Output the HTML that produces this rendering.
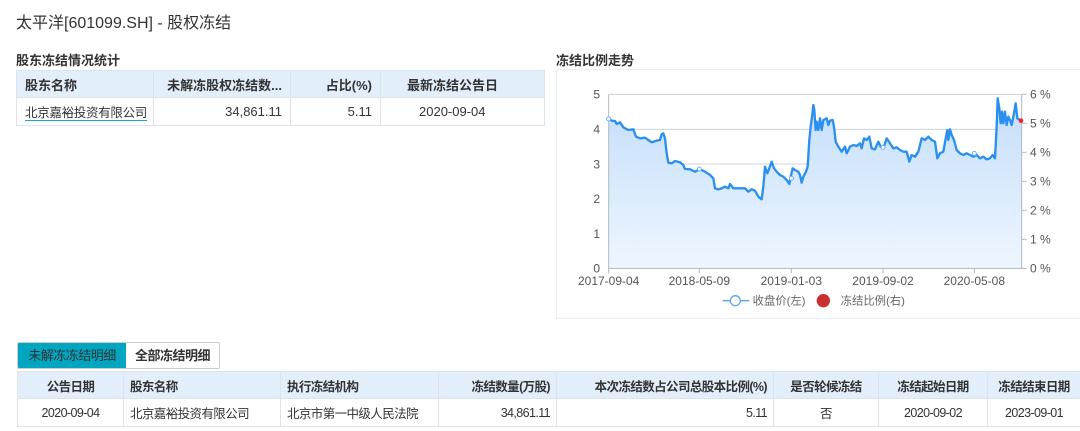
<!DOCTYPE html>
<html><head><meta charset="utf-8"><style>
*{margin:0;padding:0;box-sizing:border-box}
body{width:1080px;height:431px;background:#fff;font-family:"Liberation Sans","Noto Sans CJK SC",sans-serif;color:#333;position:relative;overflow:hidden}
.abs{position:absolute}
table{border-collapse:collapse;table-layout:fixed}
td,th{border:1px solid #dde3ea;font-size:13px;white-space:nowrap;overflow:hidden;padding:0 8px}
th{background:#e3eefb;font-weight:bold;color:#333}
.r{text-align:right}.c{text-align:center}.l{text-align:left}
#b td,#b th{font-size:12.5px;letter-spacing:-0.6px;padding:0 6px}
</style></head><body>
<div class="abs" style="left:16px;top:9px;font-size:16px;color:#333">太平洋[601099.SH] - 股权冻结</div>
<div class="abs" style="left:16px;top:50px;font-size:13px;font-weight:bold">股东冻结情况统计</div>
<table class="abs" style="left:16px;top:70px;width:528px">
<colgroup><col style="width:137px"><col style="width:137px"><col style="width:90px"><col style="width:164px"></colgroup>
<tr style="height:27px"><th class="l">股东名称</th><th class="r">未解冻股权冻结数...</th><th class="r">占比(%)</th><th class="l" style="padding-left:26px">最新冻结公告日</th></tr>
<tr style="height:28px"><td style="padding:0 5px 0 8px;font-size:12.5px;letter-spacing:-0.3px"><span style="border-bottom:1px solid #1aa8c8">北京嘉裕投资有限公司</span></td><td class="r">34,861.11</td><td class="r">5.11</td><td class="l" style="padding-left:38px">2020-09-04</td></tr>
</table>
<div class="abs" style="left:556px;top:50px;font-size:13px;font-weight:bold">冻结比例走势</div>
<div class="abs" style="left:556px;top:69px;width:530px;height:250px;border:1px solid #e6eef8"></div>
<svg class="abs" style="left:550px;top:40px" width="530" height="280" viewBox="0 0 1590 840">
<defs><linearGradient id="g" x1="0" y1="0" x2="0" y2="1"><stop offset="0" stop-color="#c4defa"/><stop offset="1" stop-color="#eef6ff"/></linearGradient></defs>
<g stroke="#ccd3dc" stroke-width="3"><line x1="176" y1="163" x2="1415" y2="163"/><line x1="176" y1="268" x2="1415" y2="268"/><line x1="176" y1="372" x2="1415" y2="372"/><line x1="176" y1="476" x2="1415" y2="476"/><line x1="176" y1="581" x2="1415" y2="581"/></g>
<path fill="url(#g)" d="M176,685 L176,237 185,242 195,243 200,252 210,247 220,262 235,270 250,268 258,290 270,295 285,293 295,300 305,307 320,302 330,300 335,283 340,280 345,295 350,340 355,368 365,370 375,363 390,367 400,375 405,387 420,388 435,395 450,388 465,395 480,405 490,415 495,445 505,448 515,445 525,440 535,445 540,432 550,445 570,445 585,445 595,455 605,448 615,452 625,470 635,478 640,440 645,380 652,400 658,385 665,365 672,385 680,395 690,405 700,410 710,420 718,432 722,410 728,385 735,390 745,395 750,405 755,428 760,410 768,395 773,380 778,300 782,260 786,230 790,195 793,210 797,270 800,245 805,270 810,235 815,270 820,240 830,235 835,255 840,242 848,240 852,260 857,305 865,320 875,335 885,320 890,340 900,320 910,315 920,318 930,310 935,325 942,295 950,300 958,290 965,325 975,328 985,305 992,320 1000,325 1010,295 1020,310 1030,325 1040,322 1050,330 1060,335 1070,335 1078,365 1085,345 1095,350 1105,335 1115,295 1125,300 1135,290 1145,300 1155,305 1162,355 1170,340 1180,335 1188,290 1192,270 1195,300 1200,268 1205,285 1212,300 1220,330 1230,340 1240,345 1250,340 1260,345 1270,350 1280,345 1290,355 1300,350 1310,358 1320,355 1328,345 1335,355 1340,260 1343,175 1348,205 1352,250 1356,215 1360,250 1365,215 1370,255 1375,230 1380,240 1385,255 1392,220 1397,190 1402,235 1410,240 1415,240 L1415,685 Z"/>
<polyline fill="none" stroke="#2b8ff0" stroke-width="7" stroke-linejoin="round" points="176,237 185,242 195,243 200,252 210,247 220,262 235,270 250,268 258,290 270,295 285,293 295,300 305,307 320,302 330,300 335,283 340,280 345,295 350,340 355,368 365,370 375,363 390,367 400,375 405,387 420,388 435,395 450,388 465,395 480,405 490,415 495,445 505,448 515,445 525,440 535,445 540,432 550,445 570,445 585,445 595,455 605,448 615,452 625,470 635,478 640,440 645,380 652,400 658,385 665,365 672,385 680,395 690,405 700,410 710,420 718,432 722,410 728,385 735,390 745,395 750,405 755,428 760,410 768,395 773,380 778,300 782,260 786,230 790,195 793,210 797,270 800,245 805,270 810,235 815,270 820,240 830,235 835,255 840,242 848,240 852,260 857,305 865,320 875,335 885,320 890,340 900,320 910,315 920,318 930,310 935,325 942,295 950,300 958,290 965,325 975,328 985,305 992,320 1000,325 1010,295 1020,310 1030,325 1040,322 1050,330 1060,335 1070,335 1078,365 1085,345 1095,350 1105,335 1115,295 1125,300 1135,290 1145,300 1155,305 1162,355 1170,340 1180,335 1188,290 1192,270 1195,300 1200,268 1205,285 1212,300 1220,330 1230,340 1240,345 1250,340 1260,345 1270,350 1280,345 1290,355 1300,350 1310,358 1320,355 1328,345 1335,355 1340,260 1343,175 1348,205 1352,250 1356,215 1360,250 1365,215 1370,255 1375,230 1380,240 1385,255 1392,220 1397,190 1402,235 1410,240 1415,240"/>
<g stroke="#b0b8c2" stroke-width="3"><line x1="176" y1="163" x2="176" y2="700"/><line x1="1415" y1="163" x2="1415" y2="685"/><line x1="176" y1="685" x2="1415" y2="685"/>
<line x1="448" y1="685" x2="448" y2="700"/><line x1="724" y1="685" x2="724" y2="700"/><line x1="999" y1="685" x2="999" y2="700"/><line x1="1273" y1="685" x2="1273" y2="700"/>
<line x1="1415" y1="163" x2="1430" y2="163"/><line x1="1415" y1="250" x2="1430" y2="250"/><line x1="1415" y1="337" x2="1430" y2="337"/><line x1="1415" y1="424" x2="1430" y2="424"/><line x1="1415" y1="511" x2="1430" y2="511"/><line x1="1415" y1="598" x2="1430" y2="598"/><line x1="1415" y1="685" x2="1430" y2="685"/></g>
<g fill="#fff" stroke="#6fb0f5" stroke-width="3"><circle cx="176" cy="237" r="6"/><circle cx="448" cy="387" r="6"/><circle cx="724" cy="415" r="6"/><circle cx="999" cy="322" r="6"/><circle cx="1273" cy="340" r="6"/></g>
<circle cx="1413" cy="242" r="7" fill="#e8262a"/>
<g font-size="36" fill="#555" font-family="Liberation Sans,sans-serif">
<g text-anchor="end"><text x="150" y="176">5</text><text x="150" y="281">4</text><text x="150" y="385">3</text><text x="150" y="489">2</text><text x="150" y="594">1</text><text x="150" y="698">0</text></g>
<text x="1440" y="176">6 %</text><text x="1440" y="263">5 %</text><text x="1440" y="350">4 %</text><text x="1440" y="437">3 %</text><text x="1440" y="524">2 %</text><text x="1440" y="611">1 %</text><text x="1440" y="698">0 %</text>
<g text-anchor="middle"><text x="176" y="735">2017-09-04</text><text x="448" y="735">2018-05-09</text><text x="724" y="735">2019-01-03</text><text x="999" y="735">2019-09-02</text><text x="1273" y="735">2020-05-08</text></g>
</g>
<line x1="518" y1="782" x2="598" y2="782" stroke="#5aa6f5" stroke-width="4"/><circle cx="556" cy="782" r="15" fill="#fff" stroke="#5aa6f5" stroke-width="4"/>
<circle cx="820" cy="782" r="20" fill="#c8302e"/>
<g font-size="34" fill="#666" font-family="Liberation Sans,Noto Sans CJK SC,sans-serif"><text x="608" y="794">收盘价(左)</text><text x="872" y="794">冻结比例(右)</text></g>
</svg>
<div class="abs" style="left:17px;top:342px;width:203px;height:27px;border:1px solid #ccc;border-radius:2px;overflow:hidden;display:flex;font-size:13px">
<div style="width:108px;background:#00a6c0;color:#333;line-height:25px;text-align:center;letter-spacing:-0.5px">未解冻冻结明细</div>
<div style="flex:1;background:#fff;line-height:25px;text-align:center;font-weight:bold;letter-spacing:-0.5px">全部冻结明细</div></div>
<table id="b" class="abs" style="left:17px;top:371px;width:1063px">
<colgroup><col style="width:106px"><col style="width:157px"><col style="width:158px"><col style="width:118px"><col style="width:217px"><col style="width:105px"><col style="width:109px"><col style="width:93px"></colgroup>
<tr style="height:27px"><th class="c">公告日期</th><th class="l">股东名称</th><th class="l">执行冻结机构</th><th class="r">冻结数量(万股)</th><th class="r">本次冻结数占公司总股本比例(%)</th><th class="c">是否轮候冻结</th><th class="c">冻结起始日期</th><th class="c">冻结结束日期</th></tr>
<tr style="height:28px"><td class="c">2020-09-04</td><td class="l">北京嘉裕投资有限公司</td><td class="l">北京市第一中级人民法院</td><td class="r">34,861.11</td><td class="r">5.11</td><td class="c">否</td><td class="c">2020-09-02</td><td class="c">2023-09-01</td></tr>
</table>
</body></html>
